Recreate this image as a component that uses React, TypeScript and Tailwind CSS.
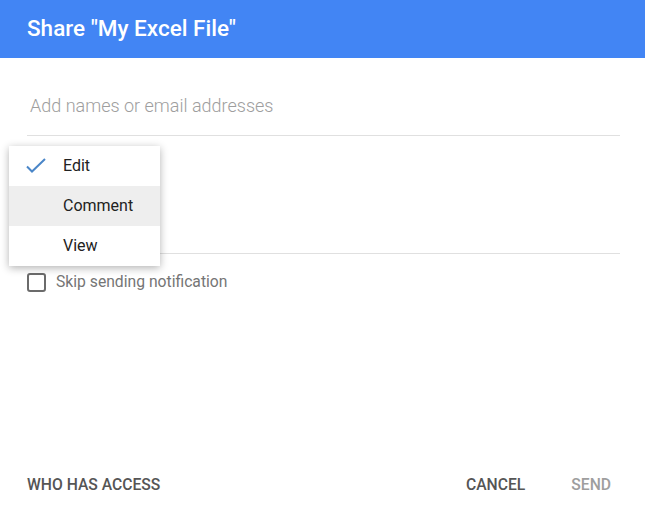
import React from "react";

export default function App() {
  return (
    <div
      className="relative flex h-[505px] w-[645px] flex-col overflow-hidden bg-white"
      style={{ fontFamily: "Roboto, 'Noto Sans', sans-serif" }}
    >
      <div className="flex h-[58px] shrink-0 items-center bg-[#4285f4] px-[27px]">
        <h1 className="text-[22.5px] font-medium text-white">Share "My Excel File"</h1>
      </div>

      <div className="px-[27px]">
        <div className="w-[593px] border-b border-[#e0e0e0] pb-[17px] pl-[3px] pt-[36px]">
          <span className="block text-[18px] font-light leading-[24px] text-[#9e9e9e]">
            Add names or email addresses
          </span>
        </div>
        <div className="h-[118px] w-[593px] border-b border-[#e0e0e0]" />
        <label className="mt-[18px] flex items-center gap-[10px]">
          <span className="h-[19px] w-[19px] rounded-[3px] border-2 border-[#6b6b6b]" />
          <span className="text-[15.7px] leading-[20px] text-[#757575]">Skip sending notification</span>
        </label>
      </div>

      <div className="mt-auto flex items-center px-[27px] pb-[10px] text-[15.7px] font-medium leading-[20px]">
        <span className="text-[#555555]">WHO HAS ACCESS</span>
        <span className="ml-auto text-[#555555]">CANCEL</span>
        <span className="ml-[46px] mr-[7px] text-[#9e9e9e]">SEND</span>
      </div>

      <div className="absolute left-[9px] top-[146px] w-[151px] bg-white shadow-[0_2px_8px_rgba(0,0,0,0.3)]">
        <div className="flex h-[40px] items-center">
          <svg className="ml-[16px] h-[24px] w-[24px]" viewBox="0 0 24 24" fill="none">
            <path d="M2 12.5l5 5L20 5" stroke="#4a86c8" strokeWidth="2" />
          </svg>
          <span className="ml-[14px] text-[16px] text-[#222222]">Edit</span>
        </div>
        <div className="flex h-[40px] items-center bg-[#eeeeee]">
          <span className="ml-[54px] text-[16px] text-[#222222]">Comment</span>
        </div>
        <div className="flex h-[40px] items-center">
          <span className="ml-[54px] text-[16px] text-[#222222]">View</span>
        </div>
      </div>
    </div>
  );
}
